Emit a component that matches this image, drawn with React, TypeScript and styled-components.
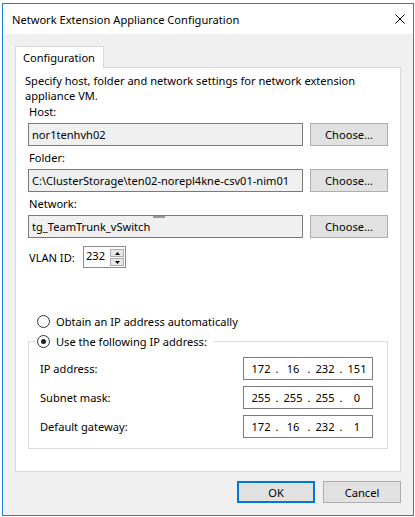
import React from "react";
import styled, { createGlobalStyle } from "styled-components";

const Global = createGlobalStyle`
  html, body { margin: 0; padding: 0; background: #ffffff; }
  body { font-family: "Noto Sans", "Open Sans", sans-serif; font-size: 11.1px; color: #000; }
  * { box-sizing: border-box; }
`;

const Page = styled.div`
  padding: 3px 1px 0 2px;
`;

const Window = styled.div`
  width: 412px;
  height: 513px;
  border: 1px solid #1883d7;
  display: flex;
  flex-direction: column;
  background: #f0f0f0;
`;

const TitleBar = styled.div`
  height: 30px;
  background: #ffffff;
  display: flex;
  align-items: center;
  justify-content: space-between;
  padding: 0 8px 0 9px;
`;

const Title = styled.span`
  font-size: 11.1px;
  line-height: 15px;
  color: #000;
`;

const Close = styled.svg`
  width: 10px;
  height: 10px;
  display: block;
`;

const Body = styled.div`
  flex: 1;
  display: flex;
  flex-direction: column;
  padding: 12px;
`;

const Tab = styled.div`
  position: relative;
  z-index: 1;
  align-self: flex-start;
  width: 89px;
  height: 22px;
  margin-bottom: -1px;
  background: #ffffff;
  border: 1px solid #d9d9d9;
  border-bottom: none;
  padding-left: 7px;
  display: flex;
  align-items: center;
  line-height: 15px;
`;

const Panel = styled.div`
  flex: 1;
  background: #ffffff;
  border: 1px solid #d9d9d9;
  padding: 5px 12px 0 12px;
  display: flex;
  flex-direction: column;
`;

const Description = styled.p`
  margin: 0 0 0 -3px;
  line-height: 15px;
`;

const Fields = styled.div`
  margin-top: 1px;
  display: flex;
  flex-direction: column;
  gap: 4px;
`;

const FieldGroup = styled.div`
  display: flex;
  flex-direction: column;
`;

const Label = styled.div`
  line-height: 15px;
  margin-bottom: 4px;
  padding-left: 1px;
`;

const FieldRow = styled.div`
  display: flex;
  gap: 7px;
  height: 23px;
`;

const ReadOnlyBox = styled.div`
  position: relative;
  flex: 1;
  border: 1px solid #7a7a7a;
  background: #f0f0f0;
  padding-left: 3px;
  display: flex;
  align-items: center;
  white-space: nowrap;
  overflow: hidden;
  line-height: 15px;
`;

const Smudge = styled.span`
  position: absolute;
  top: -1px;
  left: 124px;
  width: 12px;
  height: 3px;
  background: #9a9a9a;
`;

const Button = styled.button<{ $primary?: boolean; $height?: number }>`
  width: 78px;
  height: ${(p) => p.$height ?? 22}px;
  background: #e1e1e1;
  border: ${(p) => (p.$primary ? "2px solid #0078d7" : "1px solid #adadad")};
  font-family: inherit;
  font-size: 11.1px;
  color: #000;
  padding: 0;
  line-height: 15px;
  cursor: default;
`;

const VlanRow = styled.div`
  margin-top: 8px;
  display: flex;
  align-items: center;
  height: 22px;
`;

const VlanLabel = styled.span`
  width: 55px;
  padding-left: 1px;
  line-height: 15px;
`;

const Spinner = styled.div`
  width: 43px;
  height: 22px;
  border: 1px solid #8a8a8a;
  background: #fff;
  display: flex;
  align-items: flex-start;
  justify-content: space-between;
  padding: 1px 1px 0 2px;
`;

const SpinValue = styled.span`
  line-height: 15px;
`;

const SpinButtons = styled.div`
  display: flex;
  flex-direction: column;
  gap: 1px;
  width: 14px;
  margin-top: 1px;
`;

const SpinButton = styled.div`
  height: 8px;
  border: 1px solid #adadad;
  background: #e8e8e8;
  display: flex;
  align-items: center;
  justify-content: center;
`;

const Radio = styled.span<{ $checked?: boolean }>`
  width: 13px;
  height: 13px;
  border-radius: 50%;
  border: 1px solid #333;
  background: #fff;
  display: inline-flex;
  align-items: center;
  justify-content: center;
  flex-shrink: 0;
  &::after {
    content: "";
    width: 5px;
    height: 5px;
    border-radius: 50%;
    background: #222;
    display: ${(p) => (p.$checked ? "block" : "none")};
  }
`;

const RadioRow = styled.label`
  display: flex;
  align-items: center;
  gap: 6px;
  line-height: 15px;
  height: 15px;
  padding-left: 9px;
  margin-top: 46px;
`;

const Group = styled.fieldset`
  margin: 5px 0 0 0;
  border: 1px solid #dcdcdc;
  padding: 0 14px 10px 11px;
  min-inline-size: 0;
  display: flex;
  flex-direction: column;
  gap: 6px;
`;

const Legend = styled.legend`
  margin-left: -5px;
  padding: 0 7px 0 2px;
  display: flex;
  align-items: center;
  gap: 6px;
  line-height: 15px;
`;

const IpRow = styled.div`
  display: flex;
  align-items: center;
  justify-content: space-between;
  height: 23px;
  &:first-of-type {
    margin-top: 8px;
  }
`;

const IpBox = styled.div`
  width: 130px;
  height: 23px;
  border: 1px solid #7a7a7a;
  background: #fff;
  display: flex;
  align-items: center;
  padding-left: 4px;
  line-height: 15px;
`;

const IpSegment = styled.span`
  width: 26px;
  text-align: center;
`;

const IpDot = styled.span`
  width: 6px;
  text-align: center;
`;

const ButtonBar = styled.div`
  margin-top: 9px;
  display: flex;
  justify-content: flex-end;
  gap: 8px;
`;

const Arrow = ({ up }: { up?: boolean }) => (
  <svg width="5" height="3" viewBox="0 0 5 3">
    <polygon points={up ? "0,3 5,3 2.5,0" : "0,0 5,0 2.5,3"} fill="#000" />
  </svg>
);

const IpAddress = ({ parts }: { parts: string[] }) => (
  <IpBox>
    {parts.map((p, i) => (
      <React.Fragment key={i}>
        {i > 0 && <IpDot>.</IpDot>}
        <IpSegment>{p}</IpSegment>
      </React.Fragment>
    ))}
  </IpBox>
);

const fields = [
  { label: "Host:", value: "nor1tenhvh02" },
  { label: "Folder:", value: "C:\\ClusterStorage\\ten02-norepl4kne-csv01-nim01" },
  { label: "Network:", value: "tg_TeamTrunk_vSwitch", smudge: true },
];

const ips = [
  { label: "IP address:", parts: ["172", "16", "232", "151"] },
  { label: "Subnet mask:", parts: ["255", "255", "255", "0"] },
  { label: "Default gateway:", parts: ["172", "16", "232", "1"] },
];

export default function App() {
  return (
    <Page>
      <Global />
      <Window>
        <TitleBar>
          <Title>Network Extension Appliance Configuration</Title>
          <Close viewBox="0 0 10 10">
            <path d="M0.5 0.5 L9.5 9.5 M9.5 0.5 L0.5 9.5" stroke="#000" strokeWidth="1" />
          </Close>
        </TitleBar>
        <Body>
          <Tab>Configuration</Tab>
          <Panel>
            <Description>
              Specify host, folder and network settings for network extension appliance VM.
            </Description>
            <Fields>
              {fields.map((f) => (
                <FieldGroup key={f.label}>
                  <Label>{f.label}</Label>
                  <FieldRow>
                    <ReadOnlyBox>
                      {f.value}
                      {f.smudge && <Smudge />}
                    </ReadOnlyBox>
                    <Button $height={23}>Choose...</Button>
                  </FieldRow>
                </FieldGroup>
              ))}
            </Fields>
            <VlanRow>
              <VlanLabel>VLAN ID:</VlanLabel>
              <Spinner>
                <SpinValue>232</SpinValue>
                <SpinButtons>
                  <SpinButton>
                    <Arrow up />
                  </SpinButton>
                  <SpinButton>
                    <Arrow />
                  </SpinButton>
                </SpinButtons>
              </Spinner>
            </VlanRow>
            <RadioRow>
              <Radio />
              Obtain an IP address automatically
            </RadioRow>
            <Group>
              <Legend>
                <Radio $checked />
                Use the following IP address:
              </Legend>
              {ips.map((ip) => (
                <IpRow key={ip.label}>
                  <span>{ip.label}</span>
                  <IpAddress parts={ip.parts} />
                </IpRow>
              ))}
            </Group>
          </Panel>
          <ButtonBar>
            <Button $primary>OK</Button>
            <Button>Cancel</Button>
          </ButtonBar>
        </Body>
      </Window>
    </Page>
  );
}
